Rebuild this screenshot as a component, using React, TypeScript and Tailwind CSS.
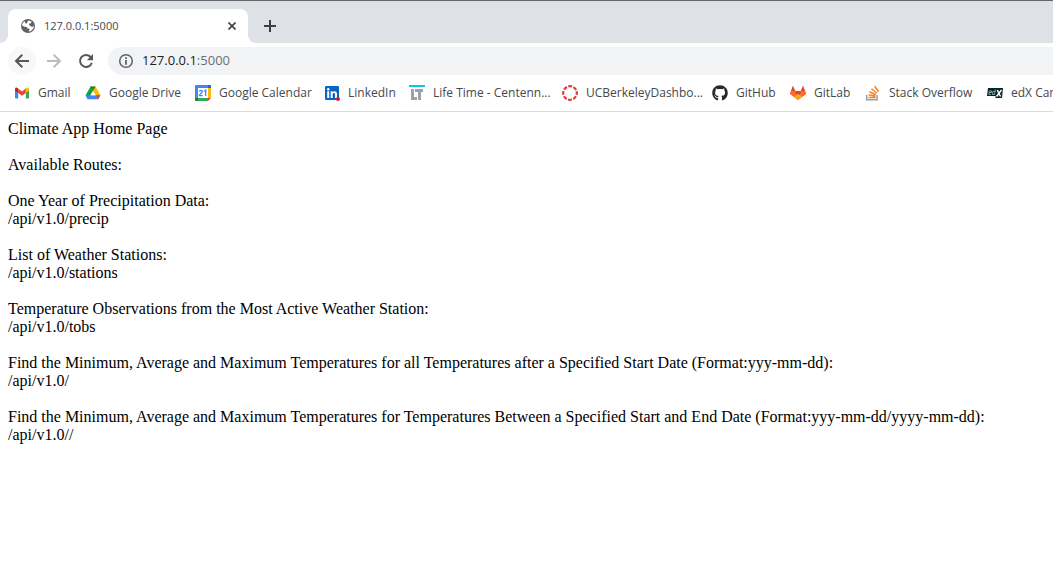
import type { ReactNode } from "react";
import { FaGithub } from "react-icons/fa";

const icon = "size-4 shrink-0";

const GlobeIcon = () => (
  <svg viewBox="0 0 16 16" className={icon}>
    <circle cx="8" cy="8" r="7" fill="#5f6368" />
    <path fill="#fff" d="M9 2.500 11.500 3.600 11 5.300 9.300 5.600 9 7H12.300L14 8.300C13.700 10.500 12.300 12.600 9.800 13.400L8.700 13.300 9.600 11.800 9.300 10.600H7.200V9.200L5.700 8.700H4.200L2 7.200C2.300 5.300 3.200 4 4.700 3.200L5.300 5.200 7 5.400 7.300 3.800z" />
    <path fill="#5f6368" d="M9.300 7.200 12.500 6.800 14 8.600 11.500 8.800z" />
  </svg>
);

const BackIcon = () => (
  <svg viewBox="0 0 16 16" className={icon}>
    <path fill="none" stroke="currentColor" strokeWidth="2" d="M15 8H2.500M8.300 1.700 2 8l6.300 6.300" />
  </svg>
);

const ForwardIcon = () => (
  <svg viewBox="0 0 16 16" className={icon}>
    <path fill="none" stroke="currentColor" strokeWidth="2" d="M1 8h12.500M7.700 1.700 14 8l-6.300 6.300" />
  </svg>
);

const ReloadIcon = () => (
  <svg viewBox="0 0 16 16" className={icon}>
    <path fill="none" stroke="currentColor" strokeWidth="2" d="M12.600 4A6 6 0 1 0 13.800 9.700" />
    <path fill="currentColor" d="M15 1v6.200H8.800z" />
  </svg>
);

const InfoIcon = () => (
  <svg viewBox="0 0 16 16" className="size-4 shrink-0 text-[#5f6368]">
    <circle cx="8" cy="8" r="6.300" fill="none" stroke="currentColor" strokeWidth="1.500" />
    <path fill="currentColor" d="M7.100 4.200h1.800v1.700H7.100zM7.100 7h1.800v4.700H7.100z" />
  </svg>
);

const GmailIcon = () => (
  <svg viewBox="0 0 16 16" className={icon}>
    <path fill="#4285f4" d="M1 4.500 4.200 7v6.500H2a1 1 0 0 1-1-1z" />
    <path fill="#34a853" d="M15 4.500 11.800 7v6.500H14a1 1 0 0 0 1-1z" />
    <path fill="#fbbc04" d="M11.800 3.600 12.800 2.900C13.800 2.200 15 2.900 15 4.100V5.500L11.800 7.900z" />
    <path fill="#c5221f" d="M4.200 3.600 3.200 2.900C2.200 2.200 1 2.900 1 4.100V5.500L4.200 7.900z" />
    <path fill="#ea4335" d="M4.200 3.600 8 6.500 11.800 3.600V7.900L8 10.800 4.200 7.900z" />
  </svg>
);

const DriveIcon = () => (
  <svg viewBox="0 0 16 16" className={icon}>
    <path fill="#0f9d58" d="M5.500 1.500h2.500L10.200 5 3.500 14.300H2.800L.600 10.300z" />
    <path fill="#ffba00" d="M5.500 1.500h5L15.400 10.300H10.600z" />
    <path fill="#4285f4" d="M5.200 10.300h10.200L13.200 14.300H2.800L.6 10.300z" />
    <path fill="#188038" d="M5.500 1.500h5L8 5.700z" />
    <path fill="#ea4335" d="M10.700 10.300h4.700L13.200 14.300z" />
    <path fill="#fff" d="M8 5.800 10.600 10.300H5.400z" />
  </svg>
);

const CalendarIcon = () => (
  <svg viewBox="0 0 16 16" className={icon}>
    <path fill="#4285f4" d="M1 0h12v3H3v10H0V1a1 1 0 0 1 1-1z" />
    <path fill="#1967d2" d="M13 0h2a1 1 0 0 1 1 1v2h-3z" />
    <path fill="#fbbc04" d="M13 3h3v10h-3z" />
    <path fill="#34a853" d="M3 13h10v3H3z" />
    <path fill="#188038" d="M0 13h3v3H1a1 1 0 0 1-1-1z" />
    <path fill="#ea4335" d="M13 13h3l-3 3z" />
    <path fill="#fff" d="M3 3h10v10H3z" />
    <path fill="none" stroke="#4285f4" strokeWidth="1.300" d="M4.400 6.500C4.700 5 7.400 5 7.400 6.500 7.400 7.700 4.600 9 4.400 10.600H7.700M9 6.300 10.700 5.200V11" />
  </svg>
);

const LinkedInIcon = () => (
  <svg viewBox="0 0 16 16" className={icon}>
    <rect x="1" y="1" width="14" height="14" rx="1" fill="#0a66c2" />
    <circle cx="4.200" cy="4.200" r="1.200" fill="#fff" />
    <path fill="#fff" d="M3.200 6.300h2V13h-2zM6.700 6.300h1.900v.9c1-1.600 4.400-1.500 4.400 1.700V13h-2V9.300c0-1.800-2.300-1.700-2.300 0V13h-2z" />
    <circle cx="14" cy="14" r="2" fill="#e0151f" />
  </svg>
);

const LifeTimeIcon = () => (
  <svg viewBox="0 0 16 16" className={icon}>
    <path fill="#14c4e8" d="M0 0h16v2H0z" />
    <path fill="#9ba3a7" d="M2 4h3v8h3v3H2zM6 4h8v3h-2v8H9V7H6z" />
  </svg>
);

const CanvasIcon = () => (
  <svg viewBox="0 0 16 16" className={icon}>
    <circle cx="8" cy="8" r="6.800" fill="none" stroke="#e03c31" strokeWidth="2.200" strokeDasharray="3.900 1.440" strokeDashoffset="1.950" />
  </svg>
);

const GitHubIcon = () => <FaGithub className="size-4 shrink-0 text-[#24292e]" />;

const GitLabIcon = () => (
  <svg viewBox="0 0 16 16" className={icon}>
    <path fill="#e24329" d="M3 .5 5.200 6H10.800L13 .5 16 8.500 8 15 0 8.500z" />
    <path fill="#fc6d26" d="M1 6H5.200L8 15 0 9zM15 6H10.800L8 15 16 9z" />
    <path fill="#e24329" d="M5.200 6h5.600L8 15z" />
    <path fill="#fca326" d="M3.500 11.700 8 8.700 12.500 11.700 8 15.200z" />
  </svg>
);

const StackOverflowIcon = () => (
  <svg viewBox="0 0 16 16" className={icon}>
    <path fill="none" stroke="#9a9da0" strokeWidth="1.500" d="M1.700 10v4.800h10.400V10" />
    <path fill="none" stroke="#f48024" strokeWidth="1.500" d="M3.500 12.600h7M3.600 9.800l6.900 1.400M4.500 6.800l6.300 3M6.500 3.800l5.300 4.500M9.700 1.200l3.900 5.600" />
  </svg>
);

const EdxIcon = () => (
  <svg viewBox="0 0 16 16" className={icon}>
    <path fill="#03262b" d="M1 3h15l-1 10H8.500v-2H0z" />
    <path fill="none" stroke="#8d9c9f" strokeWidth="1" d="M2 7.500h2.500V6H2.300L2 9.500h2M8.300 4.500 7.600 9.500H5.500L5.800 6.500H8" />
    <path fill="none" stroke="#fff" strokeWidth="1.500" d="M10.300 5 13.500 11.500M14.500 5 9.500 11.500" />
  </svg>
);

const bookmarks: { label: string; icon: ReactNode; width: string }[] = [
  { label: "Gmail", icon: <GmailIcon />, width: "w-[71px]" },
  { label: "Google Drive", icon: <DriveIcon />, width: "w-[110px]" },
  { label: "Google Calendar", icon: <CalendarIcon />, width: "w-[129px]" },
  { label: "LinkedIn", icon: <LinkedInIcon />, width: "w-[85px]" },
  { label: "Life Time - Centenn...", icon: <LifeTimeIcon />, width: "w-[153px]" },
  { label: "UCBerkeleyDashbo...", icon: <CanvasIcon />, width: "w-[150px]" },
  { label: "GitHub", icon: <GitHubIcon />, width: "w-[78px]" },
  { label: "GitLab", icon: <GitLabIcon />, width: "w-[75px]" },
  { label: "Stack Overflow", icon: <StackOverflowIcon />, width: "w-[122px]" },
  { label: "edX Car", icon: <EdxIcon />, width: "w-[80px]" },
];

const routes = [
  ["One Year of Precipitation Data:", "/api/v1.0/precip"],
  ["List of Weather Stations:", "/api/v1.0/stations"],
  ["Temperature Observations from the Most Active Weather Station:", "/api/v1.0/tobs"],
  [
    "Find the Minimum, Average and Maximum Temperatures for all Temperatures after a Specified Start Date (Format:yyy-mm-dd):",
    "/api/v1.0/",
  ],
  [
    "Find the Minimum, Average and Maximum Temperatures for Temperatures Between a Specified Start and End Date (Format:yyy-mm-dd/yyyy-mm-dd):",
    "/api/v1.0//",
  ],
];

function TabStrip() {
  return (
    <div className="flex h-[43px] items-end border-t border-[#66676b] bg-[#dee1e6]">
      <svg viewBox="0 0 8 8" className="size-2 shrink-0">
        <path fill="#fff" d="M8 0v8H0a8 8 0 0 0 8-8z" />
      </svg>
      <div className="flex h-[34px] w-60 items-center rounded-t-lg bg-white pr-2 pl-3">
        <GlobeIcon />
        <span className="ml-2 flex-1 text-[11px] text-[#45494d]">127.0.0.1:5000</span>
        <button aria-label="Close tab" className="grid size-4 place-items-center text-[#3c4043]">
          <svg viewBox="0 0 8 8" className="size-2">
            <path stroke="currentColor" strokeWidth="1.600" d="M.5.5l7 7M7.500.5l-7 7" />
          </svg>
        </button>
      </div>
      <svg viewBox="0 0 8 8" className="size-2 shrink-0">
        <path fill="#fff" d="M0 0v8h8a8 8 0 0 1-8-8z" />
      </svg>
      <button aria-label="New tab" className="grid h-[34px] w-7 place-items-center text-[#3c4043]">
        <svg viewBox="0 0 12 12" className="size-3">
          <path stroke="currentColor" strokeWidth="2" d="M6 0v12M0 6h12" />
        </svg>
      </button>
    </div>
  );
}

function Toolbar() {
  return (
    <div className="flex h-9 items-center gap-1 pl-2">
      <button aria-label="Back" className="grid size-7 place-items-center rounded-full bg-[#f8f8f9] text-[#55595e]">
        <BackIcon />
      </button>
      <button aria-label="Forward" className="grid size-7 place-items-center text-[#babcbe]">
        <ForwardIcon />
      </button>
      <button aria-label="Reload" className="grid size-7 place-items-center text-[#55595e]">
        <ReloadIcon />
      </button>
      <div className="ml-1 flex h-7 flex-1 items-center gap-2 rounded-l-full bg-[#f1f3f4] pl-[10px]">
        <InfoIcon />
        <span className="text-[13px] text-[#202124]">
          127.0.0.1<span className="text-[#6b6f74]">:5000</span>
        </span>
      </div>
    </div>
  );
}

export default function App() {
  return (
    <div className="min-h-screen overflow-x-hidden bg-white">
      <header className="font-['Open_Sans',sans-serif]">
        <TabStrip />
        <Toolbar />
        <nav className="flex h-[33px] overflow-hidden border-b border-[#dadce0] pb-1 pl-[14px]">
          {bookmarks.map((b) => (
            <a key={b.label} href="#" className={`flex shrink-0 items-center gap-2 whitespace-nowrap text-[12px] text-[#45494d] ${b.width}`}>
              {b.icon}
              {b.label}
            </a>
          ))}
        </nav>
      </header>
      <main className="p-2 font-['Liberation_Serif',serif] text-[16px] leading-[18px] text-black">
        <h1>Climate App Home Page</h1>
        <p className="mt-[18px]">Available Routes:</p>
        {routes.map(([title, path]) => (
          <section key={path} className="mt-[18px]">
            <h2>{title}</h2>
            <p>{path}</p>
          </section>
        ))}
      </main>
    </div>
  );
}
